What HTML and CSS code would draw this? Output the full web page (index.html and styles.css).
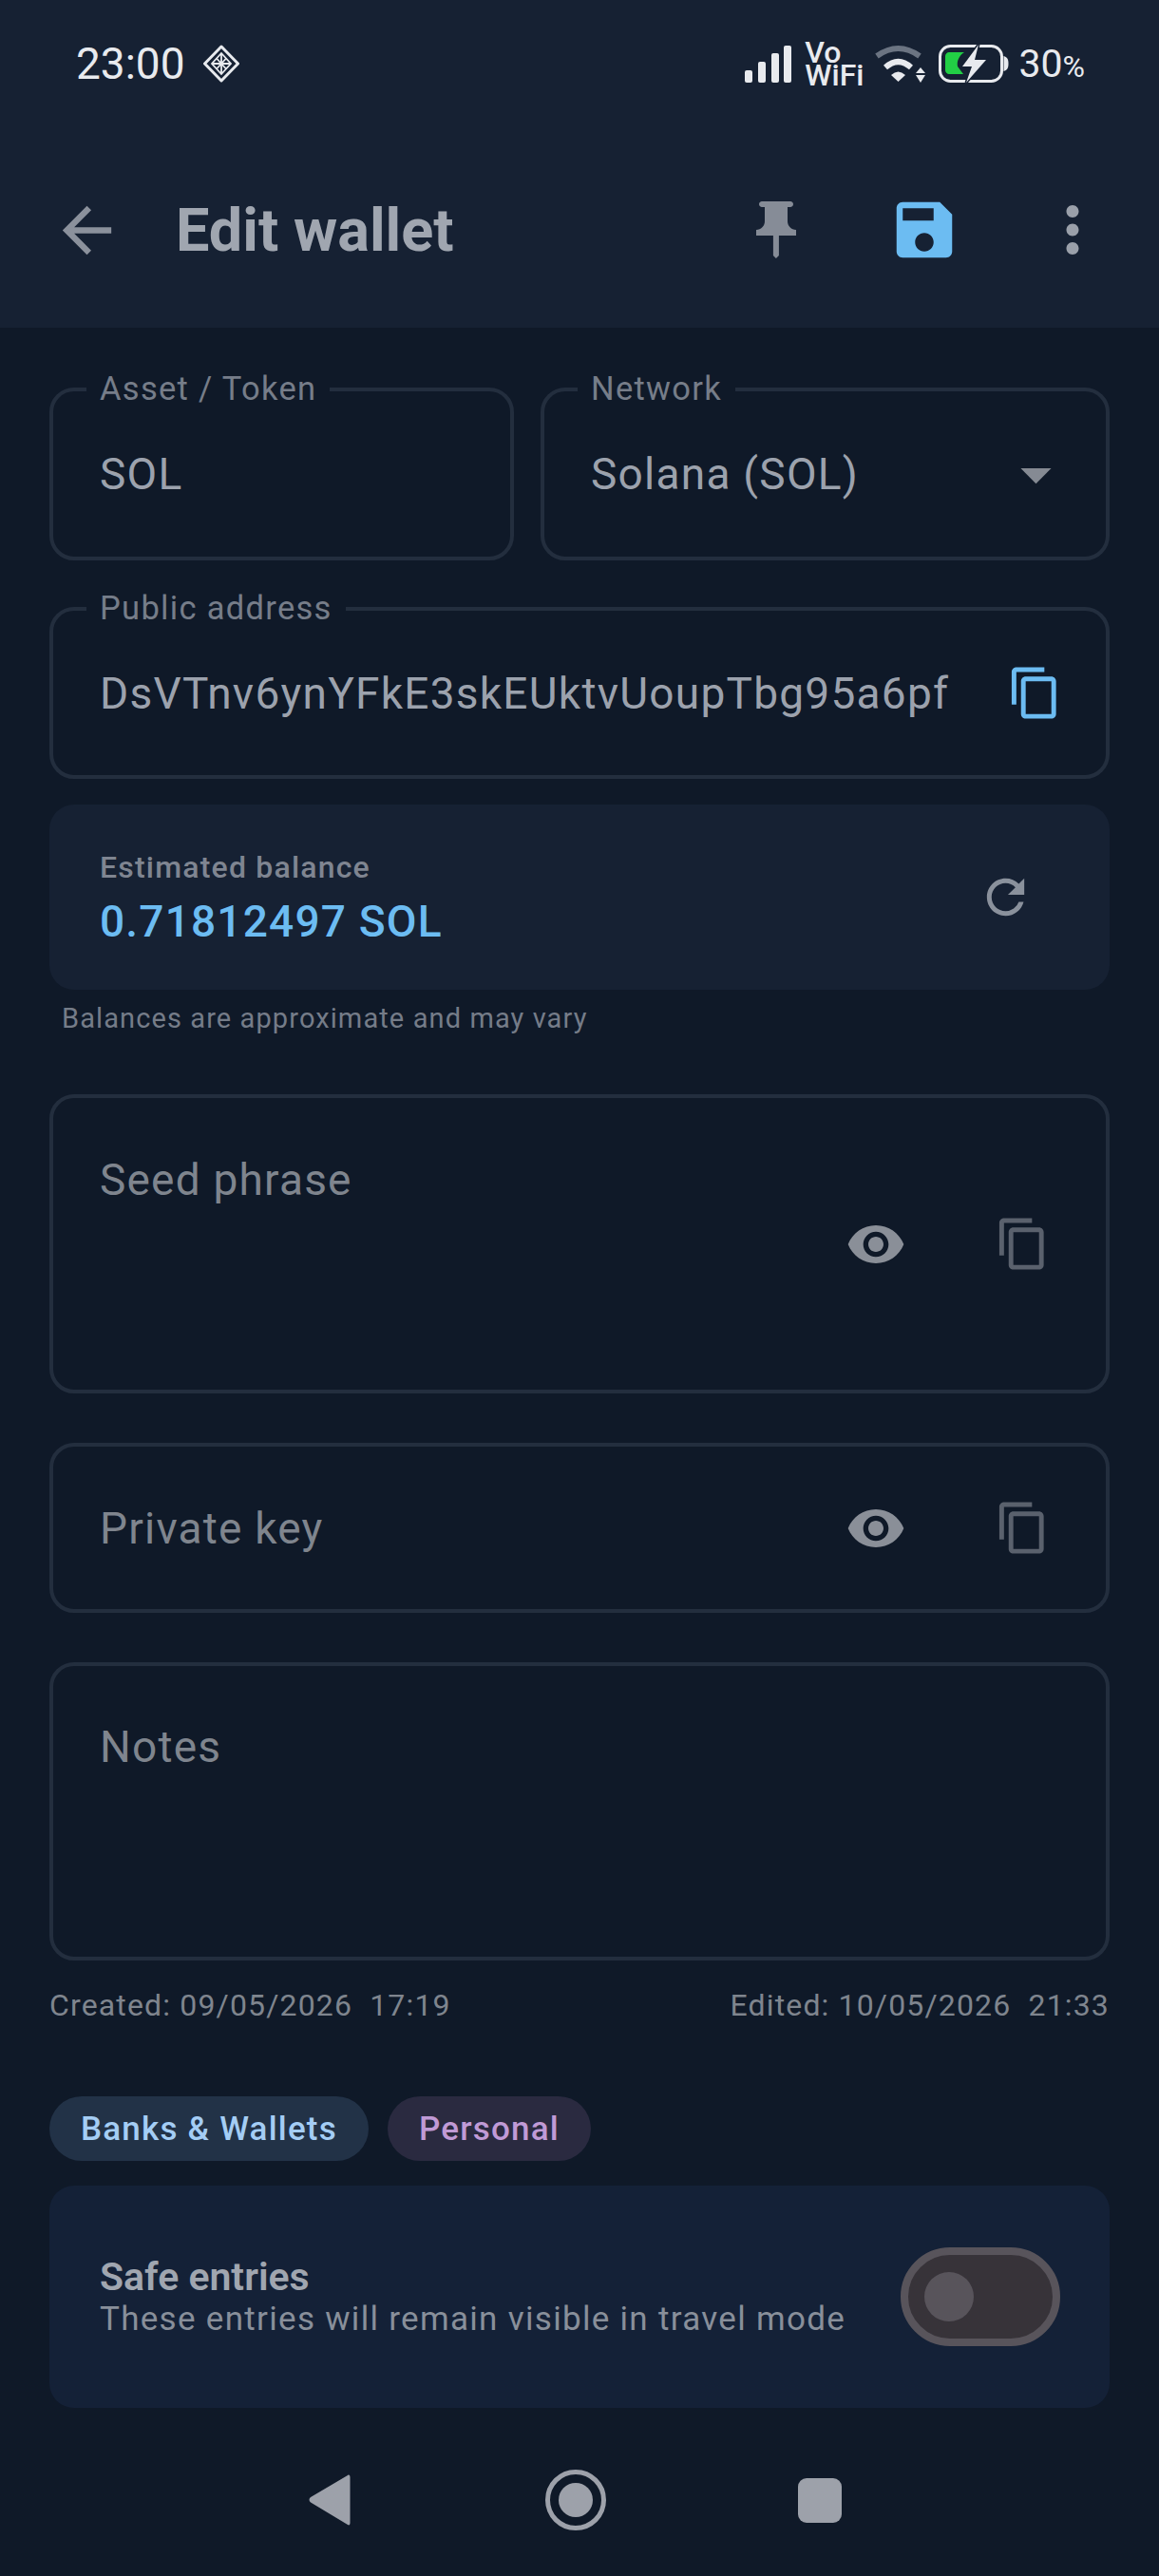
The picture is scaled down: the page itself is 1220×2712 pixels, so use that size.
FILE: index.html
```html
<!DOCTYPE html>
<html lang="en">
<head>
  <meta charset="UTF-8">
  <meta name="viewport" content="width=device-width, initial-scale=1.0">
  <title>Edit wallet</title>
  <link rel="stylesheet" href="styles.css">
</head>
<body>
  <header class="app-header">
    <div class="status-bar">
      <span class="clock">23:00</span>
      <svg class="status-diamond" width="40" height="40" viewBox="0 0 40 40" fill="none" stroke="#e8eaee">
        <path d="M20 2 37.500 20 20 38 2.500 20Z" stroke-width="3" stroke-linejoin="round"/>
        <path d="M20 9 30 20 20 31 10 20Z M15 14.500 25 25.500 M25 14.500 15 25.500 M10 20H30 M20 9V31" stroke-width="1.800"/>
      </svg>
      <span class="status-right">
        <svg width="50" height="39" viewBox="0 0 50 39" fill="#e8eaee">
          <rect x="0" y="26" width="8" height="13" rx="2"/>
          <rect x="14" y="17" width="8" height="22" rx="2"/>
          <rect x="28" y="8" width="8" height="31" rx="2"/>
          <rect x="41" y="0" width="8" height="39" rx="2"/>
        </svg>
        <span class="vowifi"><span>Vo</span><span>WiFi</span></span>
        <svg width="54" height="40" viewBox="0 0 54 40">
          <path d="M3 12Q25.500 -4 48 12" fill="none" stroke="#6b7482" stroke-width="6"/>
          <path d="M12 24Q25.500 12 39 24" fill="none" stroke="#e8eaee" stroke-width="6"/>
          <path d="M18 32Q25.500 25 33 32L25.500 39Z" fill="#e8eaee"/>
          <path d="M44 30 49 24 54 30ZM44 32H54L49 40Z" fill="#e8eaee"/>
        </svg>
        <svg class="status-battery" width="74" height="40" viewBox="0 0 74 40">
          <rect x="1.500" y="1.500" width="65" height="37" rx="11" fill="none" stroke="#e8eaee" stroke-width="3"/>
          <path d="M68.500 12C72 13 73.500 15 73.500 20S72 27 68.500 28Z" fill="#e8eaee"/>
          <path d="M11 8H27C21 12 19 18 20 23L26 31H11C9 31 7 29 7 27V12C7 10 9 8 11 8Z" fill="#22cf45"/>
          <path d="M42 0 25 23H35L29 40 50 16H38Z" fill="#e8eaee" stroke="#162133" stroke-width="3" paint-order="stroke"/>
        </svg>
        <span class="battery-level">30<small>%</small></span>
      </span>
    </div>
    <div class="toolbar">
      <button class="tool-btn">
        <svg width="77" height="77" viewBox="0 0 24 24" fill="#8b919c"><path d="M20 11H7.830l5.590-5.590L12 4l-8 8 8 8 1.410-1.410L7.830 13H20v-2z"/></svg>
      </button>
      <h1 class="toolbar-title">Edit wallet</h1>
      <button class="tool-btn">
        <svg width="72" height="72" viewBox="0 0 24 24" fill="#868c97"><path d="M16 9V4h1c.55 0 1-.45 1-1s-.45-1-1-1H7c-.55 0-1 .45-1 1s.45 1 1 1h1v5c0 1.660-1.340 3-3 3v2h5.970v7l1 1 1-1v-7H19v-2c-1.660 0-3-1.340-3-3z"/></svg>
      </button>
      <button class="tool-btn">
        <svg width="78" height="78" viewBox="0 0 24 24" fill="#6cbcf2"><path d="M17 3H5c-1.110 0-2 .9-2 2v14c0 1.100.89 2 2 2h14c1.100 0 2-.9 2-2V7l-4-4zm-5 16c-1.660 0-3-1.340-3-3s1.340-3 3-3 3 1.340 3 3-1.340 3-3 3zm3-10H5V5h10v4z"/></svg>
      </button>
      <button class="tool-btn">
        <svg width="78" height="78" viewBox="0 0 24 24" fill="#9aa0aa"><path d="M12 8c1.100 0 2-.9 2-2s-.9-2-2-2-2 .9-2 2 .9 2 2 2zm0 2c-1.100 0-2 .9-2 2s.9 2 2 2 2-.9 2-2-.9-2-2-2zm0 6c-1.100 0-2 .9-2 2s.9 2 2 2 2-.9 2-2-.9-2-2-2z"/></svg>
      </button>
    </div>
  </header>

  <main class="content">
    <div class="field-row">
      <div class="field field-asset">
        <label class="field-label">Asset / Token</label>
        <span class="field-value">SOL</span>
      </div>
      <div class="field field-network">
        <label class="field-label">Network</label>
        <span class="field-value">Solana (SOL)</span>
        <svg class="drop-arrow" width="77" height="77" viewBox="0 0 24 24" fill="#858a93"><path d="M7 10l5 5 5-5z"/></svg>
      </div>
    </div>

    <div class="field field-address">
      <label class="field-label">Public address</label>
      <span class="field-value">DsVTnv6ynYFkE3skEUktvUoupTbg95a6pf</span>
      <svg width="59" height="59" viewBox="0 0 24 24" fill="#6cbcf2"><path d="M16 1H4c-1.100 0-2 .9-2 2v14h2V3h12V1zm3 4H8c-1.100 0-2 .9-2 2v14c0 1.100.9 2 2 2h11c1.100 0 2-.9 2-2V7c0-1.100-.9-2-2-2zm0 16H8V7h11v14z"/></svg>
    </div>

    <div class="balance-card">
      <div class="balance-text">
        <div class="balance-label">Estimated balance</div>
        <div class="balance-value">0.71812497 SOL</div>
      </div>
      <svg width="59" height="59" viewBox="0 0 24 24" fill="#8a919c"><path d="M17.650 6.350A7.958 7.958 0 0 0 12 4c-4.420 0-7.990 3.580-7.990 8s3.570 8 7.990 8c3.730 0 6.840-2.550 7.730-6h-2.080A5.990 5.990 0 0 1 12 18c-3.310 0-6-2.690-6-6s2.690-6 6-6c1.660 0 3.140.69 4.220 1.780L13 11h7V4l-2.350 2.350z"/></svg>
    </div>
    <p class="balance-hint">Balances are approximate and may vary</p>

    <div class="field field-seed">
      <span class="field-hint">Seed phrase</span>
      <div class="field-actions">
        <svg width="64" height="64" viewBox="0 0 24 24" fill="#8a8f98"><path d="M12 4.500C7 4.500 2.730 7.610 1 12c1.730 4.390 6 7.500 11 7.500s9.270-3.110 11-7.500c-1.730-4.390-6-7.500-11-7.500zM12 17c-2.760 0-5-2.240-5-5s2.240-5 5-5 5 2.240 5 5-2.240 5-5 5zm0-8c-1.660 0-3 1.340-3 3s1.340 3 3 3 3-1.340 3-3-1.340-3-3-3z"/></svg>
        <svg width="59" height="59" viewBox="0 0 24 24" fill="#5a616d"><path d="M16 1H4c-1.100 0-2 .9-2 2v14h2V3h12V1zm3 4H8c-1.100 0-2 .9-2 2v14c0 1.100.9 2 2 2h11c1.100 0 2-.9 2-2V7c0-1.100-.9-2-2-2zm0 16H8V7h11v14z"/></svg>
      </div>
    </div>

    <div class="field field-key">
      <span class="field-hint">Private key</span>
      <div class="field-actions">
        <svg width="64" height="64" viewBox="0 0 24 24" fill="#8a8f98"><path d="M12 4.500C7 4.500 2.730 7.610 1 12c1.730 4.390 6 7.500 11 7.500s9.270-3.110 11-7.500c-1.730-4.390-6-7.500-11-7.500zM12 17c-2.760 0-5-2.240-5-5s2.240-5 5-5 5 2.240 5 5-2.240 5-5 5zm0-8c-1.660 0-3 1.340-3 3s1.340 3 3 3 3-1.340 3-3-1.340-3-3-3z"/></svg>
        <svg width="59" height="59" viewBox="0 0 24 24" fill="#5a616d"><path d="M16 1H4c-1.100 0-2 .9-2 2v14h2V3h12V1zm3 4H8c-1.100 0-2 .9-2 2v14c0 1.100.9 2 2 2h11c1.100 0 2-.9 2-2V7c0-1.100-.9-2-2-2zm0 16H8V7h11v14z"/></svg>
      </div>
    </div>

    <div class="field field-notes">
      <span class="field-hint">Notes</span>
    </div>

    <div class="dates">
      <span>Created: 09/05/2026  17:19</span>
      <span>Edited: 10/05/2026  21:33</span>
    </div>

    <div class="chips">
      <span class="chip chip-blue">Banks &amp; Wallets</span>
      <span class="chip chip-purple">Personal</span>
    </div>

    <div class="safe-card">
      <div>
        <div class="safe-title">Safe entries</div>
        <div class="safe-sub">These entries will remain visible in travel mode</div>
      </div>
      <div class="switch"><span class="switch-thumb"></span></div>
    </div>
  </main>

  <nav class="nav-bar">
    <svg class="nav-back" width="44" height="54" viewBox="0 0 44 54" fill="#9da1aa"><path d="M41 1 2 24C0 25.500 0 28 2 29.500L41 53C42.500 54 43.500 53 43.500 51V3C43.500 1 42.500 0 41 1Z"/></svg>
    <svg width="64" height="64" viewBox="0 0 64 64"><circle cx="32" cy="32" r="29.500" fill="none" stroke="#9da1aa" stroke-width="5"/><circle cx="32" cy="32" r="18" fill="#9da1aa"/></svg>
    <svg width="46" height="47" viewBox="0 0 46 47" fill="#9da1aa"><rect width="46" height="47" rx="9"/></svg>
  </nav>
</body>
</html>
```

FILE: styles.css
```css
* {
  box-sizing: border-box;
}

body {
  margin: 0;
  background-color: #0f1928;
  font-family: Roboto, "Noto Sans", sans-serif;
  color: #a0a6b0;
}

/* header */
.app-header {
  height: 345px;
  background-color: #162133;
}

.status-bar {
  display: flex;
  align-items: center;
  height: 134px;
  padding: 0 78px 0 80px;
}

.clock {
  font-size: 46px;
  color: #e8eaee;
}

.status-diamond {
  margin-left: 18px;
}

.status-right {
  display: flex;
  align-items: center;
  margin-left: auto;
}

.vowifi {
  display: flex;
  flex-direction: column;
  margin-left: 13px;
  font-size: 32px;
  font-weight: 500;
  line-height: 24px;
  color: #e8eaee;
}

.vowifi + svg {
  margin-left: 11px;
}

.status-battery {
  margin-left: 14px;
}

.battery-level {
  margin-left: 10px;
  font-size: 41px;
  color: #e8eaee;
}

.battery-level small {
  font-size: 32px;
}

.toolbar {
  display: flex;
  align-items: center;
  height: 156px;
  margin-top: 30px;
  padding: 0 13px;
}

.tool-btn {
  display: flex;
  align-items: center;
  justify-content: center;
  width: 156px;
  height: 156px;
  padding: 0;
  border: none;
  background: none;
}

.toolbar-title {
  flex: 1;
  margin: 0 0 0 16px;
  font-size: 63px;
  font-weight: 700;
  color: #a0a6b0;
}

/* form */
.content {
  padding: 63px 52px 0;
}

.field-row {
  display: flex;
  gap: 28px;
}

.field {
  position: relative;
  display: flex;
  align-items: center;
  border: 4px solid #232e3e;
  border-radius: 26px;
  padding-left: 49px;
}

.field-asset {
  width: 489px;
  height: 182px;
}

.field-network {
  flex: 1;
  height: 182px;
  justify-content: space-between;
  padding-right: 35px;
}

.field-address {
  height: 181px;
  margin-top: 49px;
  justify-content: space-between;
  padding-right: 45px;
}

.field-label {
  position: absolute;
  top: -21px;
  left: 35px;
  padding: 0 14px;
  background-color: #0f1928;
  font-size: 34.500px;
  line-height: 36px;
  letter-spacing: 1.3px;
  color: #767d89;
}

.field-value {
  font-size: 46px;
  letter-spacing: 1.25px;
  color: #9ca2ad;
}

.field-hint {
  font-size: 46px;
  letter-spacing: 1.2px;
  color: #7f858e;
}

.field-actions {
  display: flex;
  align-items: center;
  gap: 93px;
  margin-left: auto;
  padding-right: 58px;
}

.field-seed {
  height: 315px;
}

.field-seed .field-hint {
  align-self: flex-start;
  padding-top: 59px;
}

.field-notes .field-hint {
  align-self: flex-start;
  padding-top: 58px;
}

.field-key {
  height: 179px;
  margin-top: 52px;
}

.field-notes {
  height: 314px;
  margin-top: 52px;
}

.balance-card {
  display: flex;
  align-items: center;
  justify-content: space-between;
  height: 195px;
  margin-top: 27px;
  padding: 0 80px 0 53px;
  border-radius: 26px;
  background-color: #162133;
}

.balance-label {
  font-size: 32px;
  font-weight: 500;
  letter-spacing: 1.2px;
  line-height: 40px;
  color: #7f8591;
}

.balance-value {
  margin-top: 10px;
  font-size: 46px;
  font-weight: 500;
  letter-spacing: 1.2px;
  line-height: 54px;
  color: #6cbcf2;
}

.balance-hint {
  margin: 13px 0 63px 13px;
  font-size: 29px;
  line-height: 34px;
  letter-spacing: 1.1px;
  color: #757c88;
}

.dates {
  display: flex;
  justify-content: space-between;
  margin-top: 28px;
  font-size: 32px;
  line-height: 38px;
  letter-spacing: 1.15px;
  white-space: pre;
  color: #7f858e;
}

.chips {
  display: flex;
  gap: 20px;
  margin-top: 77px;
}

.chip {
  display: flex;
  align-items: center;
  height: 68px;
  padding: 0 33px;
  border-radius: 34px;
  font-size: 35px;
  font-weight: 500;
  letter-spacing: 1.2px;
}

.chip-blue {
  background-color: #223247;
  color: #a4cdf5;
}

.chip-purple {
  background-color: #2a2a40;
  color: #c09ad6;
}

.safe-card {
  display: flex;
  align-items: center;
  justify-content: space-between;
  height: 234px;
  margin-top: 26px;
  padding: 2px 52px 0 53px;
  border-radius: 26px;
  background-color: #142137;
}

.safe-title {
  font-size: 41px;
  font-weight: 600;
  line-height: 46px;
  color: #a0a6b0;
}

.safe-sub {
  font-size: 35px;
  letter-spacing: 1.3px;
  line-height: 44px;
  color: #888f9a;
}

.switch {
  display: flex;
  align-items: center;
  width: 168px;
  height: 104px;
  margin-top: -2px;
  padding-left: 17px;
  border: 8px solid #58545b;
  border-radius: 52px;
  background-color: #373339;
}

.switch-thumb {
  width: 52px;
  height: 52px;
  border-radius: 50%;
  background-color: #58545b;
}

/* system navigation */
.nav-bar {
  display: flex;
  align-items: center;
  justify-content: center;
  gap: 202px;
  margin-top: 65px;
  padding-right: 9px;
}

.nav-back {
  margin-right: 3px;
}
```
